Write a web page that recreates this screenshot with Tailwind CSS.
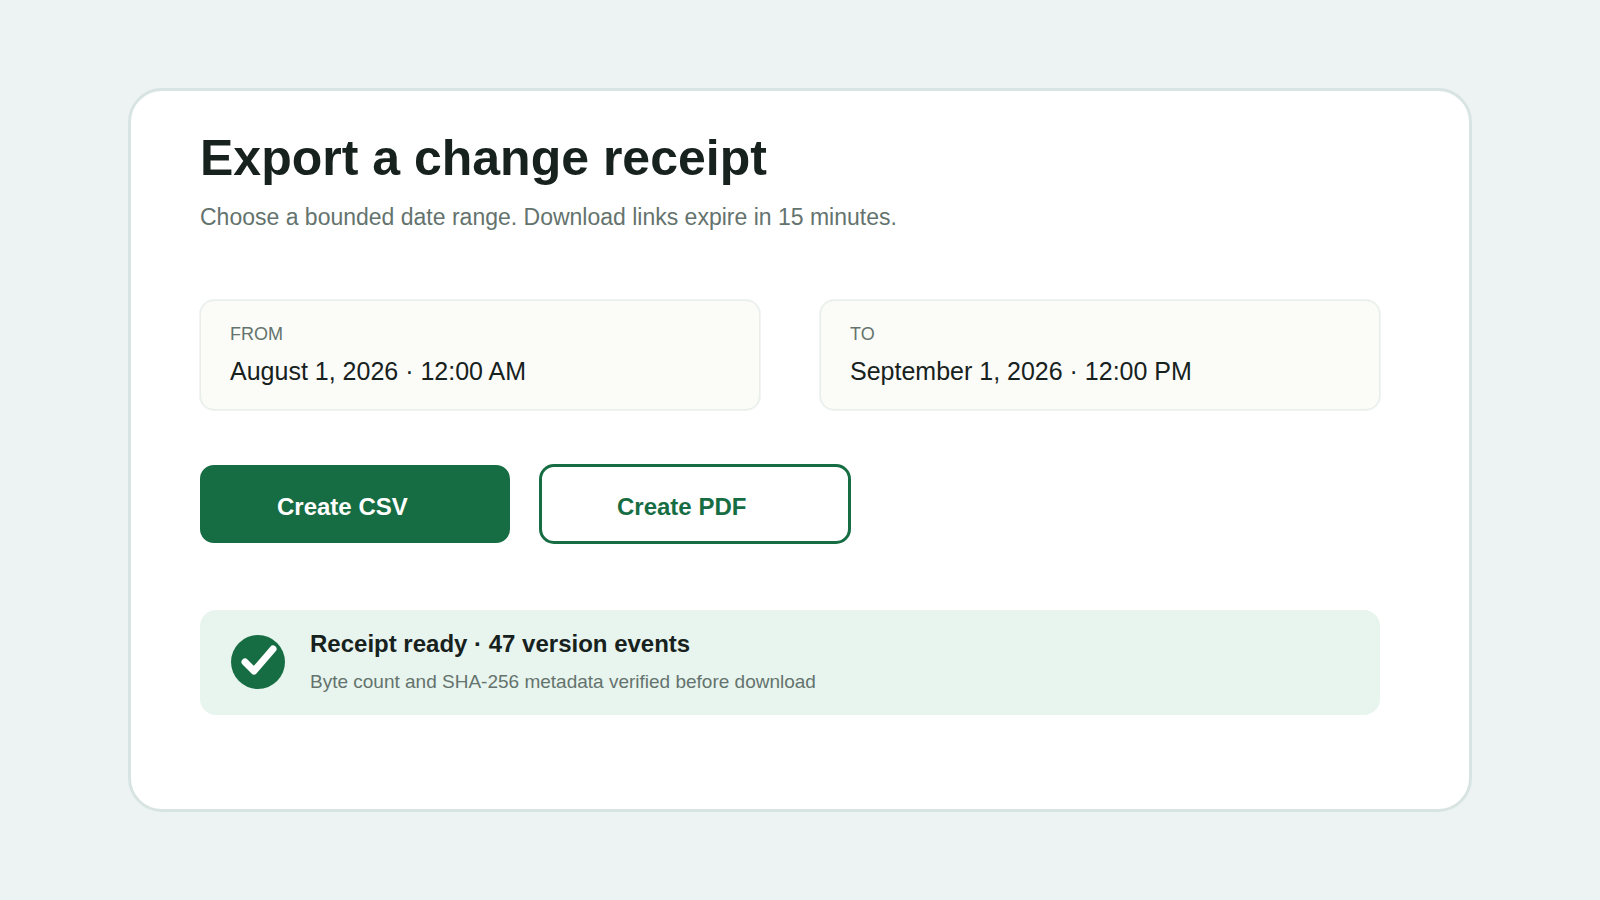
<!DOCTYPE html>
<html lang="en">

<head>
    <meta charset="UTF-8">
    <meta name="viewport" content="width=device-width, initial-scale=1.0">
    <title>Export a change receipt</title>
    <script src="https://cdn.jsdelivr.net/npm/@tailwindcss/browser@4"></script>
</head>

<body class="min-h-screen flex px-32 py-[88px] bg-[#edf3f3] text-[#17211d] font-['Liberation_Sans',Arial,sans-serif]">
    <main class="flex-1 bg-white border-3 border-[#d8e4e1] rounded-[34px] pt-[39px] pb-20 pl-[69px] pr-[89px]">
        <h1 class="text-[50px] leading-14 font-bold">Export a change receipt</h1>
        <p class="mt-[17px] text-[23px] leading-7 text-[#64736d]">Choose a bounded date range. Download links expire in 15 minutes.</p>

        <form id="exportForm">
            <!-- Date range -->
            <div class="mt-[69px] grid grid-cols-2 gap-15">
                <div class="rounded-[14px] bg-[#fbfcf7] border border-[#e9eeea] ring-1 ring-[#f0f4f2] pt-[23px] pb-[23px] px-[29px]">
                    <label for="from" class="block text-[18px] leading-5 text-[#64736d]">FROM</label>
                    <input type="text" id="from" name="from" value="August 1, 2026 · 12:00 AM"
                        class="block w-full h-[30px] mt-3 text-[25px] leading-[30px] focus:outline-none">
                </div>
                <div class="rounded-[14px] bg-[#fbfcf7] border border-[#e9eeea] ring-1 ring-[#f0f4f2] pt-[23px] pb-[23px] px-[29px]">
                    <label for="to" class="block text-[18px] leading-5 text-[#64736d]">TO</label>
                    <input type="text" id="to" name="to" value="September 1, 2026 · 12:00 PM"
                        class="block w-full h-[30px] mt-3 text-[25px] leading-[30px] focus:outline-none">
                </div>
            </div>

            <!-- Actions -->
            <div class="mt-[55px] flex gap-[30px]">
                <button type="submit" name="format" value="csv"
                    class="w-[310px] h-[78px] pt-1.5 pl-[75px] text-left text-[24px] font-bold rounded-[14px] border-2 border-[#176d43] bg-[#176d43] text-white">
                    Create CSV
                </button>
                <button type="submit" name="format" value="pdf"
                    class="w-[310px] h-[78px] pt-1.5 pl-[75px] text-left text-[24px] font-bold rounded-[14px] border-2 border-[#176d43] ring-1 ring-[#176d43] bg-white text-[#176d43]">
                    Create PDF
                </button>
            </div>
        </form>

        <!-- Receipt status -->
        <section role="status" class="mt-[67px] flex items-center gap-[25px] rounded-2xl bg-[#e8f5ee] pt-5 pb-[21px] px-[31px]">
            <svg class="w-[54px] h-[54px] shrink-0" viewBox="0 0 54 54" fill="none" aria-hidden="true">
                <circle cx="27" cy="27" r="27" fill="#176d43" />
                <path d="M14 27l9 9 19-22" stroke="#fff" stroke-width="7" stroke-linecap="round" stroke-linejoin="round" />
            </svg>
            <div>
                <h2 class="text-[24px] leading-7 font-bold">Receipt ready · 47 version events</h2>
                <p class="mt-3 text-[19px] leading-6 text-[#64736d]">Byte count and SHA-256 metadata verified before download</p>
            </div>
        </section>
    </main>

    <script>
        document.getElementById('exportForm').addEventListener('submit', function (e) {
            e.preventDefault();
        });
    </script>
</body>

</html>
